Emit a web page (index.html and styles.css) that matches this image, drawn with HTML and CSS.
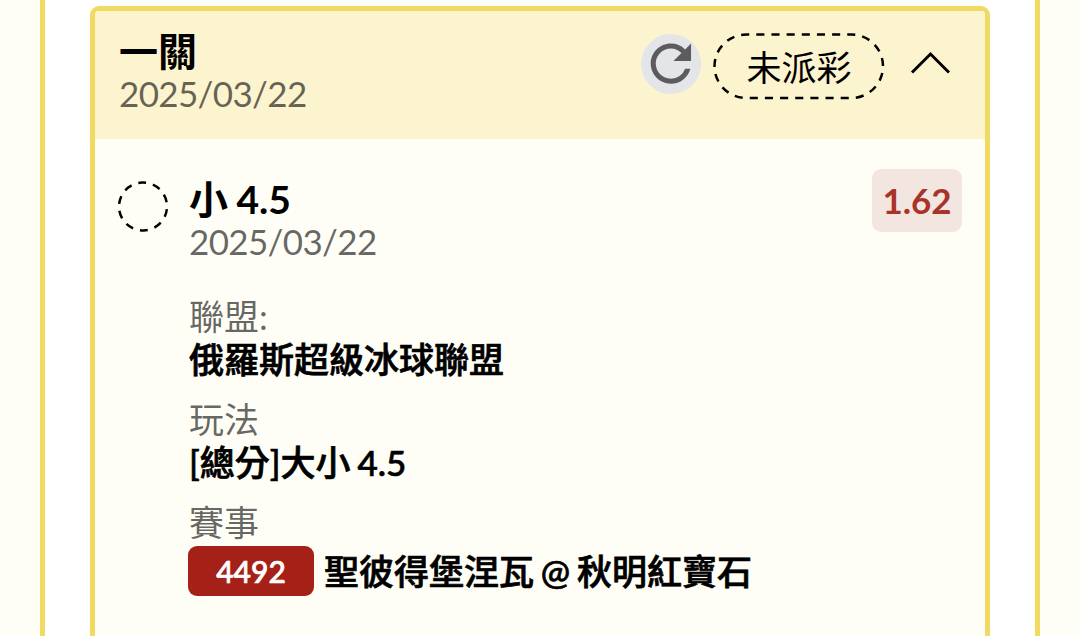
FILE: index.html
```html
<!DOCTYPE html>
<html lang="zh-Hant">
  <head>
    <meta charset="UTF-8" />
    <meta name="viewport" content="width=device-width, initial-scale=1.0" />
    <title>注單</title>
    <link rel="stylesheet" href="styles.css">
  </head>
  <body>
    <div class="panel">
      <div class="card">
        <div class="card-header">
          <div class="card-title">
            <h2>一關</h2>
            <p class="date">2025/03/22</p>
          </div>
          <div class="card-actions">
            <button class="refresh" aria-label="重新整理">
              <svg width="60" height="60" viewBox="0.15 0.25 23.8 23.8">
                <path d="M17.65 6.35A7.96 7.96 0 0 0 12 4c-4.42 0-7.99 3.58-7.99 8s3.57 8 7.99 8c3.73 0 6.84-2.55 7.73-6h-2.08A5.99 5.99 0 0 1 12 18c-3.31 0-6-2.69-6-6s2.69-6 6-6c1.66 0 3.14.69 4.22 1.78L13 11h7V4z" fill="#5c5b5e" />
              </svg>
            </button>
            <div class="status">
              <svg class="status-outline" width="172" height="67" viewBox="0 0 172 67">
                <rect x="1.5" y="1.5" width="168.5" height="63.5" rx="31.7" pathLength="405" />
              </svg>
              <span>未派彩</span>
            </div>
            <button class="toggle" aria-label="收合">
              <svg width="40" height="26" viewBox="0 0 40 26">
                <path d="M2 22.5L20.5 4L39 22.5" fill="none" stroke="#000" stroke-width="3" />
              </svg>
            </button>
          </div>
        </div>
        <div class="card-body">
          <svg class="marker" width="52" height="52" viewBox="0 0 52 52">
            <circle cx="26" cy="26.5" r="24" pathLength="150" />
          </svg>
          <div class="bet">
            <h3>小 4.5</h3>
            <p class="date">2025/03/22</p>
            <dl class="details">
              <dt>聯盟:</dt>
              <dd>俄羅斯超級冰球聯盟</dd>
              <dt>玩法</dt>
              <dd>[總分]大小 4.5</dd>
              <dt>賽事</dt>
              <dd class="match"><span class="match-no">4492</span>聖彼得堡涅瓦 @ 秋明紅寶石</dd>
            </dl>
          </div>
          <div class="odds">1.62</div>
        </div>
      </div>
    </div>
  </body>
</html>
```
FILE: styles.css
```css
* {
  box-sizing: border-box;
}
body {
  margin: 0;
  padding: 0 40px;
  height: 636px;
  overflow: hidden;
  background-color: #fffef6;
  color: #000;
  font-family: Lato, "Noto Sans CJK TC", sans-serif;
  font-size: 35px;
}
h2,
h3,
p,
dl,
dd {
  margin: 0;
}
button {
  padding: 0;
  border: none;
  background: none;
}
svg {
  display: block;
}
.panel {
  height: 636px;
  padding: 6px 45px 0;
  border: solid #f1da62;
  border-width: 0 5px;
  background-color: #fff;
}
.card {
  height: 660px;
  border: 5px solid #f1da62;
  border-radius: 9px;
  background-color: #fffef6;
  overflow: hidden;
}
.card-header {
  display: flex;
  justify-content: space-between;
  height: 128px;
  padding: 18px 35px 0 24px;
  background-color: #fcf3cf;
}
h2,
h3 {
  font-size: 39px;
  line-height: 44px;
  font-weight: 700;
}
h3 {
  word-spacing: -1px;
}
.date {
  line-height: 40px;
  letter-spacing: -0.65px;
  color: rgba(0, 0, 0, 0.6);
}
.card-actions {
  display: flex;
  align-items: flex-start;
  padding-top: 4px;
}
.refresh {
  width: 60px;
  height: 60px;
  margin-top: 1px;
  border-radius: 50%;
  background-color: #e4e5e8;
}
.status {
  position: relative;
  width: 172px;
  height: 67px;
  margin-left: 12px;
  line-height: 69px;
  text-align: center;
}
.status-outline {
  position: absolute;
  top: 0;
  left: 0;
}
.status-outline rect,
.marker circle {
  fill: none;
  stroke: #000;
  stroke-width: 2.5;
  stroke-dasharray: 8 7;
}
.status-outline rect {
  stroke-dashoffset: 5;
}
.toggle {
  margin: 17px 0 0 25px;
}
.card-body {
  display: flex;
  align-items: flex-start;
  padding: 30px 23px 0 22px;
}
.marker {
  margin-top: 11px;
}
.marker circle {
  stroke-dashoffset: 4;
  transform: rotate(-92deg);
  transform-origin: 26px 26.5px;
}
.bet {
  flex: 1;
  margin-left: 20px;
  padding-top: 8px;
}
.details {
  margin-top: 34px;
}
.details dt {
  line-height: 43px;
  color: rgba(0, 0, 0, 0.6);
}
.details dd {
  height: 43px;
  margin-bottom: 17px;
  line-height: 43px;
  font-weight: 500;
  word-spacing: -2px;
  -webkit-text-stroke: 0.7px;
}
.details .match {
  display: flex;
  align-items: center;
  height: 50px;
  margin-top: 2px;
}
.match-no {
  width: 126px;
  height: 50px;
  margin: 0 10px 0 -1px;
  border-radius: 9px;
  background-color: #a52016;
  color: #fff;
  font-size: 30px;
  line-height: 50px;
  text-align: center;
}
.odds {
  width: 90px;
  height: 63px;
  border-radius: 9px;
  background-color: #f3e6e1;
  color: #a93329;
  font-weight: 700;
  line-height: 63px;
  text-align: center;
}
```
